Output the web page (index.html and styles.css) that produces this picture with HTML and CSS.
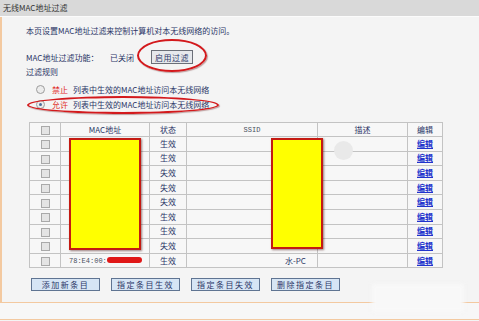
FILE: index.html
```html
<!DOCTYPE html>
<html lang="zh-CN">
<head>
<meta charset="UTF-8">
<title>无线MAC地址过滤</title>
<link rel="stylesheet" href="styles.css">
</head>
<body>
<div class="titlebar">无线MAC地址过滤</div>
<div class="page">
    <p class="intro">本页设置MAC地址过滤来控制计算机对本无线网络的访问。</p>
    <div class="setting">
        <span class="label">MAC地址过滤功能：</span>
        <span class="state">已关闭</span>
        <button class="btn-small">启用过滤</button>
    </div>
    <div class="rules">过滤规则</div>
    <div class="rule rule-first"><span class="radio"></span><span class="red">禁止</span>列表中生效的MAC地址访问本无线网络</div>
    <div class="rule"><span class="radio checked"></span><span class="red">允许</span>列表中生效的MAC地址访问本无线网络</div>

    <table class="list">
        <tr>
            <th class="c-box"><span class="check"></span></th>
            <th class="c-mac">MAC地址</th>
            <th class="c-state">状态</th>
            <th class="c-ssid mono">SSID</th>
            <th class="c-desc">描述</th>
            <th class="c-edit">编辑</th>
        </tr>
        <tr><td><span class="check"></span></td><td></td><td>生效</td><td></td><td></td><td><a href="#">编辑</a></td></tr>
        <tr><td><span class="check"></span></td><td></td><td>生效</td><td></td><td></td><td><a href="#">编辑</a></td></tr>
        <tr><td><span class="check"></span></td><td></td><td>失效</td><td></td><td></td><td><a href="#">编辑</a></td></tr>
        <tr><td><span class="check"></span></td><td></td><td>失效</td><td></td><td></td><td><a href="#">编辑</a></td></tr>
        <tr><td><span class="check"></span></td><td></td><td>失效</td><td></td><td></td><td><a href="#">编辑</a></td></tr>
        <tr><td><span class="check"></span></td><td></td><td>生效</td><td></td><td></td><td><a href="#">编辑</a></td></tr>
        <tr><td><span class="check"></span></td><td></td><td>生效</td><td></td><td></td><td><a href="#">编辑</a></td></tr>
        <tr><td><span class="check"></span></td><td></td><td>失效</td><td></td><td></td><td><a href="#">编辑</a></td></tr>
        <tr><td><span class="check"></span></td><td class="mac mono">78:E4:00:</td><td>生效</td><td class="ssid">水-PC</td><td></td><td><a href="#">编辑</a></td></tr>
    </table>

    <div class="actions">
        <button class="btn">添加新条目</button>
        <button class="btn">指定条目生效</button>
        <button class="btn">指定条目失效</button>
        <button class="btn">删除指定条目</button>
    </div>
</div>
<div class="footer"></div>

<!-- marks drawn over the screenshot -->
<div class="ring ring-btn"></div>
<div class="ring ring-rule"></div>
<div class="cover cover-mac"></div>
<div class="cover cover-ssid"></div>
<div class="scribble"></div>
<div class="smudge"></div>
<div class="glare"></div>
</body>
</html>
```

FILE: styles.css
```css
/* page */
body {
    margin: 0;
    background-color: #f4f4f4;
    color: #2b3566;
    font-family: "Noto Sans CJK SC", "Liberation Sans", sans-serif;
    font-size: 8px;
    position: relative;
    height: 321px;
    overflow: hidden;
}
.titlebar {
    height: 16px;
    line-height: 16px;
    padding-left: 3px;
    background-color: #d9d9d9;
    color: #333;
    border-bottom: 1px solid #fbfbfb;
}
.page {
    border-left: 2px solid #f3c9a0;
    padding-left: 24px;
    height: 285px;
}
.intro {
    margin: 0;
    padding-top: 8px;
    line-height: 12px;
}
/* filter switch */
.setting {
    display: flex;
    align-items: center;
    height: 14px;
    margin-top: 13px;
}
.label {
    width: 84px;
}
.state {
    width: 41px;
}
.btn-small {
    height: 14px;
    width: 42px;
    padding: 0;
    border: 1px solid #6b6f78;
    background-color: #e6e8ec;
    color: #2b3566;
    font-family: inherit;
    font-size: 8px;
    letter-spacing: 0.5px;
}
.rules {
    margin-top: 2px;
    line-height: 12px;
}
.rule {
    display: flex;
    align-items: center;
    height: 15px;
    padding-left: 10px;
}
.rule-first {
    margin-top: 4px;
}
.radio {
    width: 7px;
    height: 7px;
    border: 1px solid #9c9c9c;
    border-radius: 50%;
    background-color: #ececec;
    margin-right: 7px;
    position: relative;
}
.radio.checked::after {
    content: "";
    position: absolute;
    left: 2px;
    top: 2px;
    width: 3px;
    height: 3px;
    border-radius: 50%;
    background-color: #4d6f9a;
}
.red {
    color: #e0281e;
    margin-right: 5px;
}
/* list table */
.list {
    margin-top: 10px;
    margin-left: 3px;
    border-collapse: collapse;
    background-color: #f7f7f7;
}
.list th,
.list td {
    border: 1px solid #c3c3c3;
    padding: 0;
    height: 13.6px;
    text-align: center;
    font-weight: normal;
    line-height: 12px;
}
.list th {
    height: 13px;
}
.c-box { width: 30px; }
.c-mac { width: 88px; }
.c-state { width: 36px; }
.c-ssid { width: 130px; }
.c-desc { width: 89px; }
.c-edit { width: 34px; }
.mono {
    font-family: "Liberation Mono", monospace;
    font-size: 7px;
    color: #4a5060;
}
.list td.mac {
    text-align: left;
    padding-left: 8px;
}
.list td.ssid {
    text-align: left;
    padding-left: 98px;
}
.check {
    display: inline-block;
    width: 7px;
    height: 7px;
    border: 1px solid #a9a9a9;
    background-color: #e4e4e4;
    vertical-align: middle;
}
.list a {
    color: #2233cc;
    font-weight: bold;
}
/* bottom buttons */
.actions {
    display: flex;
    gap: 11px;
    margin-top: 10px;
    padding-left: 5px;
}
.btn {
    width: 69px;
    height: 13px;
    padding: 0;
    border: 1px solid #5f7492;
    background-color: #d6e5f5;
    color: #2b3566;
    font-family: inherit;
    font-size: 8px;
    letter-spacing: 1.5px;
}
.footer {
    height: 16px;
    border-top: 1px solid #f3c9a0;
    border-bottom: 1px solid #f3c9a0;
    background-color: #f7f7f7;
}
/* overlays */
.ring {
    position: absolute;
    border: 2.5px solid #d3191c;
    border-radius: 50%;
    box-shadow: 1px 1px 1px rgba(90, 0, 0, 0.35);
}
.ring-btn {
    left: 137px;
    top: 39px;
    width: 66px;
    height: 29px;
}
.ring-rule {
    left: 27px;
    top: 96px;
    width: 188px;
    height: 14px;
}
.cover {
    position: absolute;
    background-color: #ffff00;
    border: 2px solid #c41a12;
    box-shadow: 1px 1px 2px rgba(60, 0, 0, 0.5);
}
.cover-mac {
    left: 69px;
    top: 138px;
    width: 68px;
    height: 108px;
}
.cover-ssid {
    left: 271px;
    top: 138px;
    width: 48px;
    height: 107px;
}
.scribble {
    position: absolute;
    left: 107px;
    top: 257px;
    width: 35px;
    height: 6px;
    border-radius: 4px;
    background-color: #e01818;
}
.smudge {
    position: absolute;
    left: 334px;
    top: 141px;
    width: 19px;
    height: 19px;
    border-radius: 50%;
    background-color: #e9e9e9;
}
.glare {
    position: absolute;
    left: 372px;
    top: 284px;
    width: 92px;
    height: 28px;
    background-color: #f8f8f8;
    filter: blur(2px);
}
```
